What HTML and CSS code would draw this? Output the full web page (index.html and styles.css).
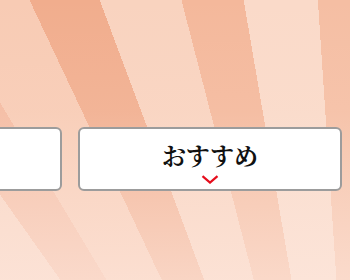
FILE: index.html
```html
<!DOCTYPE html>
<html lang="ja">
<head>
<meta charset="utf-8">
<title>おすすめ</title>
<link rel="stylesheet" href="styles.css">
</head>
<body>
<div class="stage">
  <div class="tabs">
    <div class="tab"></div>
    <div class="tab">
      <span class="label">おすすめ</span>
      <svg class="chev" width="18" height="9" viewBox="0 0 18 9" aria-hidden="true">
        <path d="M1.5 1.2 L9 7.6 L16.5 1.2" fill="none" stroke="#e60d1c" stroke-width="2.2" stroke-linecap="butt" stroke-linejoin="miter"/>
      </svg>
    </div>
  </div>
</div>
</body>
</html>
```

FILE: styles.css
```css
html, body {
  margin: 0;
  padding: 0;
}

body {
  width: 350px;
  height: 280px;
  overflow: hidden;
}

.stage {
  width: 350px;
  height: 280px;
  overflow: hidden;
  background:
    linear-gradient(to bottom,
      rgba(253, 233, 224, 0) 0%,
      rgba(253, 233, 224, 0.12) 40%,
      rgba(253, 233, 224, 0.42) 70%,
      rgba(253, 233, 224, 0.66) 100%),
    conic-gradient(from 0deg at 365px 710px,
      #f5bea3 0deg 1.5deg,
      #f9d6c4 1.5deg 318deg,
      #f6c2a8 318deg 319deg,
      #f9d4c1 319deg 324.7deg,
      #f4baa0 324.7deg 329deg,
      #f8cbb4 329deg 334.7deg,
      #f1ad8d 334.7deg 339.5deg,
      #f9d3bf 339.5deg 345.5deg,
      #f4b89b 345.5deg 350.3deg,
      #fadac9 350.3deg 356.2deg,
      #f5bea3 356.2deg 360deg);
}

.tabs {
  display: flex;
  gap: 16px;
  padding-top: 127px;
  margin-left: -202px;
}

.tab {
  box-sizing: border-box;
  width: 264px;
  height: 64px;
  flex: none;
  background: #ffffff;
  border: 2px solid #9c9c9c;
  border-radius: 6px;
  display: flex;
  flex-direction: column;
  align-items: center;
  padding-top: 14px;
}

.label {
  font-family: "Noto Serif CJK JP", "Noto Sans CJK JP", serif;
  font-weight: 700;
  font-size: 24px;
  line-height: 24px;
  color: #111111;
  letter-spacing: 0;
}

.chev {
  display: block;
  margin-top: 8px;
}
```
